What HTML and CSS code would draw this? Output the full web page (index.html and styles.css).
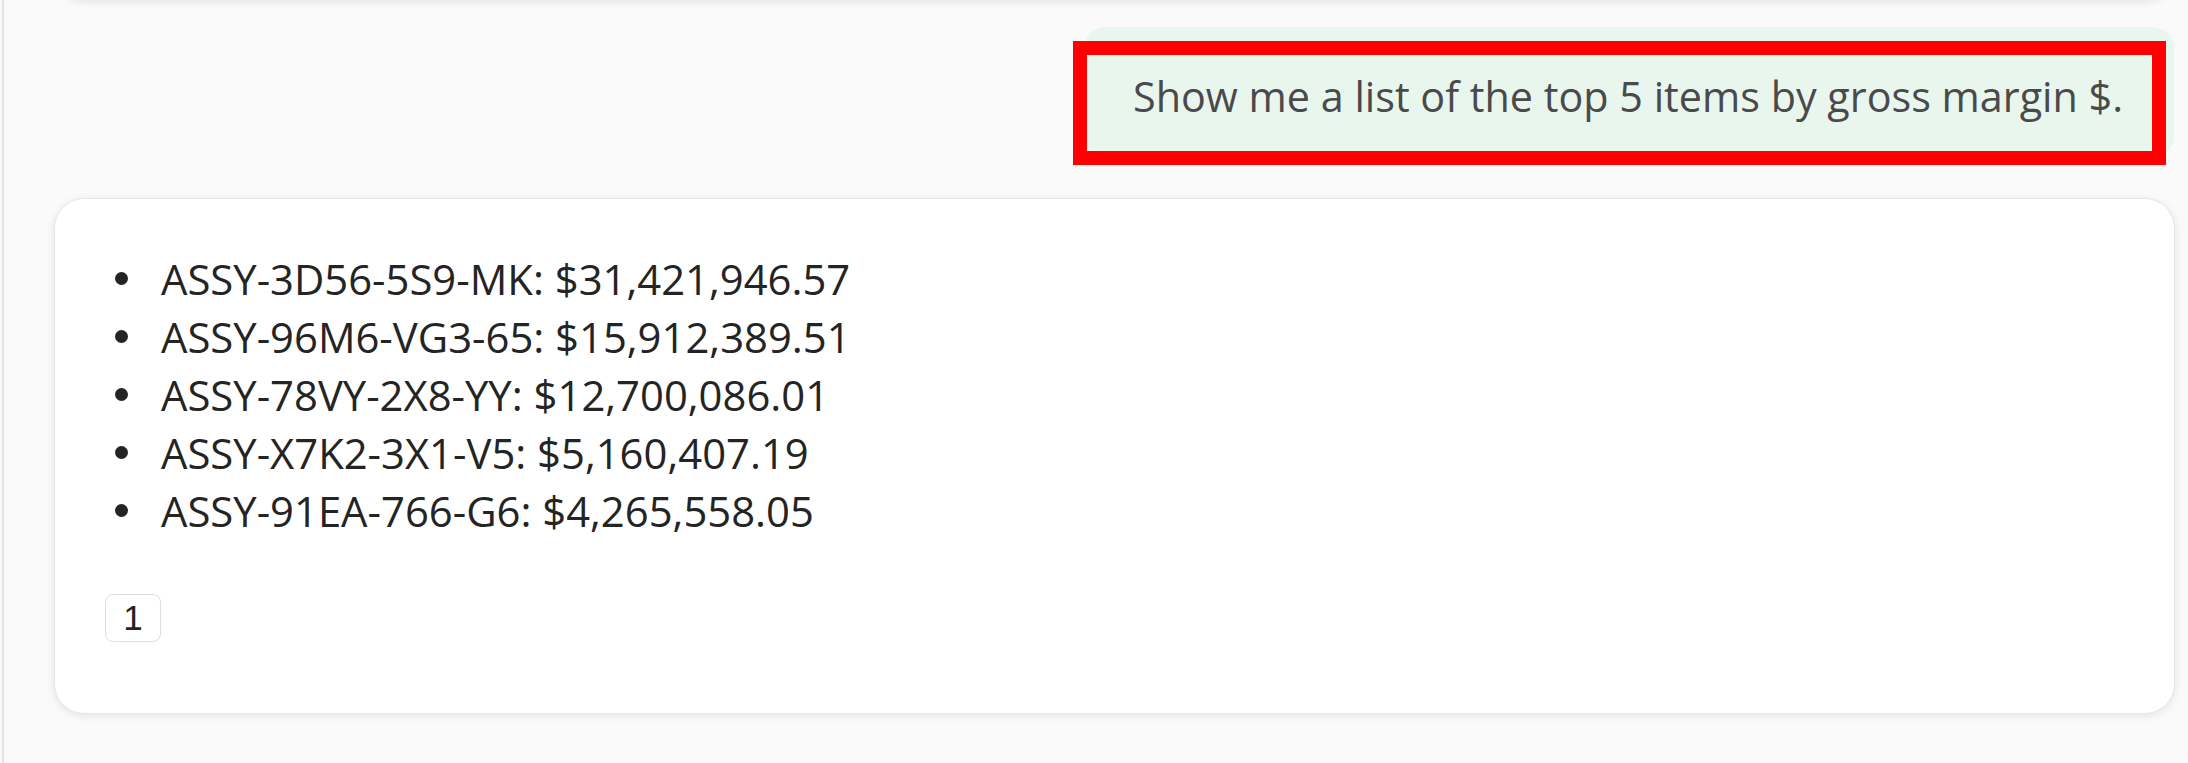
FILE: index.html
```html
<!DOCTYPE html>
<html lang="en">
<head>
<meta charset="utf-8">
<title>Chat</title>
<link rel="stylesheet" href="styles.css">
</head>
<body>
<div class="app">
  <div class="prev-card"></div>
  <div class="user-row">
    <div class="bubble">
      <span class="bubble-text">Show me a list of the top 5 items by gross margin $.</span>
      <div class="highlight"></div>
    </div>
  </div>
  <div class="answer-card">
    <ul class="items">
      <li>ASSY-3D56-5S9-MK: $31,421,946.57</li>
      <li>ASSY-96M6-VG3-65: $15,912,389.51</li>
      <li>ASSY-78VY-2X8-YY: $12,700,086.01</li>
      <li>ASSY-X7K2-3X1-V5: $5,160,407.19</li>
      <li>ASSY-91EA-766-G6: $4,265,558.05</li>
    </ul>
    <div class="citation">1</div>
  </div>
</div>
</body>
</html>
```

FILE: styles.css
```css
html {
  overflow: hidden;
}

body {
  margin: 0;
  padding: 0;
  background: #fafafa;
}

.app {
  display: flow-root;
  margin-left: 2px;
  border-left: 2px solid #e2e2e2;
  height: 763px;
  box-sizing: border-box;
  font-family: "Open Sans", "Noto Sans", sans-serif;
}

.prev-card {
  height: 60px;
  margin: -60px 13px 0 50px;
  background: #ffffff;
  border-radius: 30px;
  box-shadow: 0 2px 8px rgba(0, 0, 0, 0.09);
}

.user-row {
  display: flex;
  justify-content: flex-end;
  padding-top: 27px;
  padding-right: 14px;
}

.bubble {
  position: relative;
  background: #e9f6ee;
  border-radius: 22px;
  padding: 40px 51px 33px 49px;
  white-space: nowrap;
}

.bubble-text {
  display: block;
  font-size: 41.3px;
  line-height: 58px;
  color: #4a4a4a;
}

.highlight {
  position: absolute;
  left: -11px;
  top: 14px;
  right: 8px;
  bottom: -7px;
  border: 14px solid #ff0000;
}

.answer-card {
  margin: 40px 13px 0 50px;
  background: #ffffff;
  border: 1px solid #e6e6e6;
  border-radius: 30px;
  box-shadow: 0 2px 8px rgba(0, 0, 0, 0.09);
  padding: 51px 50px 71px 50px;
}

.items {
  list-style: none;
  margin: 0;
  padding: 0 0 0 10px;
}

.items li {
  display: flex;
  align-items: center;
  font-size: 41.8px;
  line-height: 58px;
  color: #242424;
  white-space: nowrap;
}

.items li::before {
  content: "";
  flex: none;
  width: 13px;
  height: 13px;
  border-radius: 50%;
  background: #242424;
  margin-right: 33px;
  margin-top: -2px;
}

.citation {
  margin-top: 54px;
  width: 56px;
  height: 48px;
  box-sizing: border-box;
  border: 1px solid #dedede;
  border-radius: 8px;
  display: flex;
  align-items: center;
  justify-content: center;
  font-family: "Liberation Sans", Arial, sans-serif;
  font-size: 35px;
  color: #242424;
}
```
